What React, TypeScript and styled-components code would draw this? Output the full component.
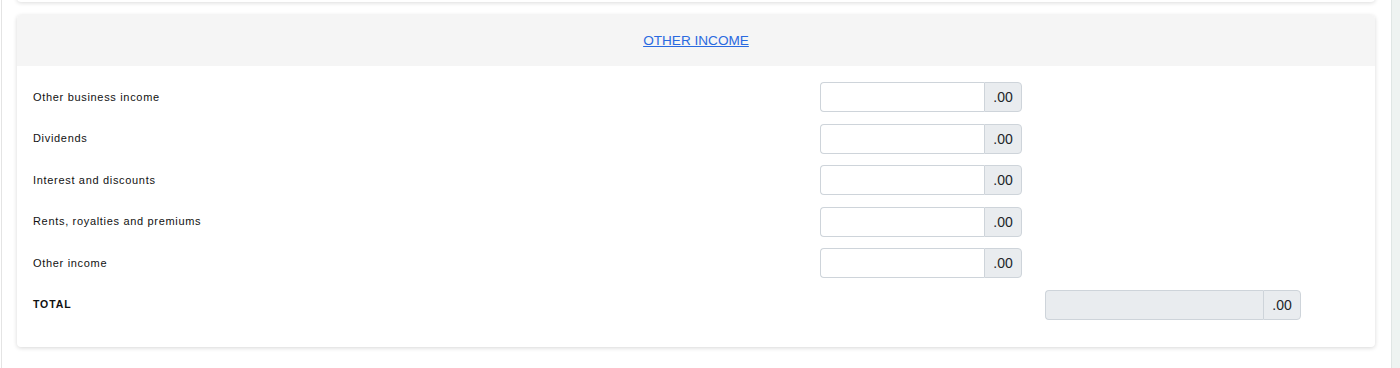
import React from "react";
import styled, { createGlobalStyle } from "styled-components";

const GlobalStyle = createGlobalStyle`
  html, body {
    margin: 0;
    padding: 0;
    background: #ffffff;
    font-family: "Liberation Sans", Arial, sans-serif;
    overflow: hidden;
  }
`;

const rows = [
  "Other business income",
  "Dividends",
  "Interest and discounts",
  "Rents, royalties and premiums",
  "Other income",
];

const App = () => {
  return (
    <>
      <GlobalStyle />
      <Shell>
        <Main>
          <PrevCard />
          <Card>
            <CardHeader>
              <HeaderLink href="#">OTHER INCOME</HeaderLink>
            </CardHeader>
            <CardBody>
              {rows.map((label) => (
                <Row key={label}>
                  <Label>{label}</Label>
                  <InputGroup width={202}>
                    <Field type="text" />
                    <Addon>.00</Addon>
                  </InputGroup>
                </Row>
              ))}
              <Row>
                <Label bold>TOTAL</Label>
                <span />
                <InputGroup width={256}>
                  <Field type="text" disabled />
                  <Addon>.00</Addon>
                </InputGroup>
              </Row>
            </CardBody>
          </Card>
        </Main>
        <Sidebar />
      </Shell>
    </>
  );
};

export default App;

const Shell = styled.div`
  display: flex;
  width: 1400px;
  height: 368px;
  overflow: hidden;
`;

const Main = styled.div`
  flex: 1;
  margin-left: 1px;
  border-left: 1px solid #e4e4e4;
  padding: 0 16px 0 15px;
  display: flex;
  flex-direction: column;
`;

const Sidebar = styled.div`
  width: 8px;
  background: #eef3f1;
  border-left: 1px solid #dfe6e4;
`;

const PrevCard = styled.div`
  flex-shrink: 0;
  height: 12px;
  margin-top: -10px;
  background: #fff;
  border-radius: 4px;
  box-shadow: 0 1px 4px rgba(0, 0, 0, 0.14);
`;

const Card = styled.div`
  flex-shrink: 0;
  margin-top: 13px;
  background: #fff;
  border-radius: 4px;
  box-shadow: 0 1px 4px rgba(0, 0, 0, 0.16);
  overflow: hidden;
`;

const CardHeader = styled.div`
  height: 51px;
  background: #f5f5f5;
  display: flex;
  align-items: center;
  justify-content: center;
`;

const HeaderLink = styled.a`
  color: #2a6ae0;
  font-size: 13.6px;
  text-decoration: underline;
  padding-bottom: 1px;
`;

const CardBody = styled.div`
  padding: 16px 0 27px 16px;
  display: flex;
  flex-direction: column;
  gap: 11.6px;
`;

const Row = styled.div`
  display: grid;
  grid-template-columns: 787px 225px 256px;
  align-items: center;
  height: 30px;
`;

const Label = styled.div<{ bold?: boolean }>`
  font-size: ${(p) => (p.bold ? "10.5px" : "11px")};
  font-weight: ${(p) => (p.bold ? 700 : 400)};
  letter-spacing: ${(p) => (p.bold ? "0.9px" : "0.68px")};
  color: #111;
  padding-bottom: 1px;
`;

const InputGroup = styled.div<{ width: number }>`
  display: flex;
  width: ${(p) => p.width}px;
  height: 30px;
`;

const Field = styled.input`
  flex: 1;
  min-width: 0;
  box-sizing: border-box;
  height: 100%;
  margin: 0;
  border: 1px solid #ced4da;
  border-right: none;
  border-radius: 4px 0 0 4px;
  background: #fff;
  padding: 0 8px;
  font-family: inherit;

  &:disabled {
    background: #e9ecef;
  }
`;

const Addon = styled.div`
  box-sizing: border-box;
  width: 38px;
  height: 100%;
  display: flex;
  align-items: center;
  justify-content: center;
  background: #e9ecef;
  border: 1px solid #ced4da;
  border-radius: 0 4px 4px 0;
  font-size: 14px;
  color: #212529;
`;
